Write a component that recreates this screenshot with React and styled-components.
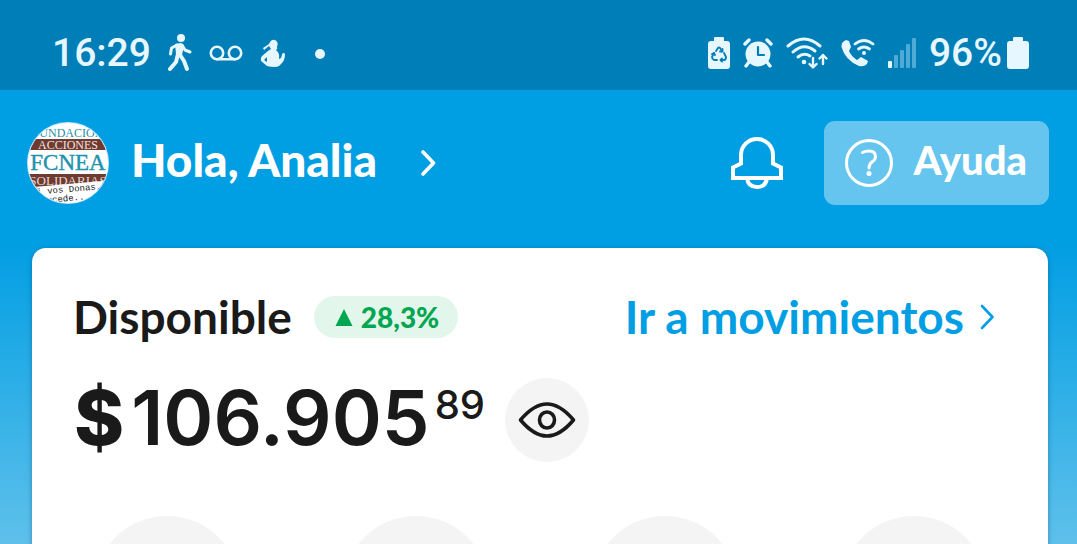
import React from 'react';
import styled, { createGlobalStyle } from 'styled-components';

const GlobalStyle = createGlobalStyle`
	* {
		box-sizing: border-box;
	}

	body {
		margin: 0;
		font-family: Lato, sans-serif;
		color: #1a1a1a;
	}

	svg {
		display: block;
		flex: none;
	}
`;

const Page = styled.div`
	height: 100vh;
	overflow: hidden;
	background: linear-gradient(#009ee3 240px, #60c1eb 550px);
`;

const StatusBar = styled.div`
	display: flex;
	justify-content: space-between;
	height: 90px;
	padding: 16px 48px 0 52px;
	background: #007eb8;
	color: #e6f7ff;
	font-family: Roboto, sans-serif;
	font-size: 39px;
	font-weight: 500;
`;

const StatusGroup = styled.div`
	display: flex;
	align-items: center;
	gap: ${({ $gap }) => $gap}px;
`;

const BatteryLevel = styled.span`
	display: flex;
	align-items: center;
	gap: 5px;
`;

const Header = styled.header`
	display: flex;
	align-items: center;
	justify-content: space-between;
	padding: 31px 28px 0 27px;
`;

const HeaderActions = styled.div`
	display: flex;
	align-items: center;
	gap: 40px;
`;

const PlainButton = styled.button`
	display: flex;
	align-items: center;
	padding: 0;
	border: 0;
	background: none;
	color: inherit;
	font: inherit;
	cursor: pointer;
`;

const ProfileButton = styled(PlainButton)`
	gap: 22px;
	color: #fff;
	font-size: 46px;
	font-weight: 900;
	line-height: 54px;
`;

const HeaderLabel = styled.span`
	padding-bottom: 6px;
`;

const ProfileName = styled(HeaderLabel)`
	padding-right: 22px;
`;

const BellButton = styled(PlainButton)`
	color: #fff;
`;

const HelpButton = styled(PlainButton)`
	gap: 20px;
	height: 84px;
	padding: 0 22px 0 20px;
	border-radius: 11px;
	background: #66c5ee;
	color: #fff;
	font-size: 40px;
	font-weight: 900;
	line-height: 54px;
`;

const Card = styled.main`
	margin: 43px 29px 0 32px;
	border-radius: 14px;
	background: #fff;
	box-shadow: 0 1px 5px rgba(0, 60, 100, 0.4);
`;

const CardTop = styled.div`
	display: flex;
	align-items: center;
	justify-content: space-between;
	padding: 42px 53px 0 41px;
`;

const Balance = styled.div`
	display: flex;
	align-items: center;
	gap: 22px;
`;

const Title = styled.h1`
	margin: 0;
	font-size: 46px;
	font-weight: 700;
	line-height: 54px;
`;

const Badge = styled.span`
	display: flex;
	align-items: center;
	gap: 8px;
	height: 42px;
	padding: 0 19px 0 21px;
	border-radius: 21px;
	background: #e3f6eb;
	color: #00a650;
	font-size: 28px;
	font-weight: 900;
`;

const MovementsLink = styled.a`
	display: flex;
	align-items: center;
	gap: 16px;
	color: #009ee3;
	font-size: 46px;
	font-weight: 700;
	line-height: 54px;
	text-decoration: none;
`;

const AmountRow = styled.div`
	display: flex;
	align-items: center;
	gap: 20px;
	padding: 34px 42px 0;
`;

const Amount = styled.div`
	display: flex;
	align-items: flex-start;
	padding-bottom: 6px;
	font-family: Inter, sans-serif;
	font-size: 76px;
	font-weight: 600;
	line-height: 78px;
`;

const Currency = styled.span`
	padding-right: 7px;
	font-weight: 800;
`;

const Cents = styled.sup`
	padding-left: 5px;
	font-size: 40px;
	font-weight: 500;
	line-height: 54px;
`;

const EyeButton = styled(PlainButton)`
	justify-content: center;
	width: 84px;
	height: 84px;
	border-radius: 50%;
	background: #f4f4f4;
`;

const Shortcuts = styled.div`
	display: grid;
	grid-template-columns: repeat(4, 1fr);
	justify-items: center;
	padding: 54px 10px 40px;
`;

const Shortcut = styled.span`
	width: 146px;
	height: 146px;
	border-radius: 50%;
	background: #f4f4f4;
`;

const line = {
	fill: 'none',
	stroke: 'currentColor',
	strokeLinecap: 'round',
	strokeLinejoin: 'round'
};

const WalkIcon = () => (
	<svg width="24" height="38" viewBox="0 0 24 38" aria-hidden="true">
		<circle cx="13" cy="4" r="4" fill="currentColor" />
		<path d="M7 10 L13 9 L16 12 L14 21 L9 22 L8 20 Z" fill="currentColor" />
		<g {...line}>
			<path d="M9 11 L3.5 14 L2.5 20" strokeWidth="3" />
			<path d="M14 11 L17 16 L22 18" strokeWidth="3" />
			<path d="M10 20 L8 28 L2 35" strokeWidth="4" />
			<path d="M12 21 L16 27 L19 35" strokeWidth="4" />
		</g>
	</svg>
);

const VoicemailIcon = () => (
	<svg width="34" height="18" viewBox="0 0 34 18" aria-hidden="true">
		<g {...line} strokeWidth="2.6">
			<circle cx="8" cy="9" r="6.2" />
			<circle cx="26" cy="9" r="6.2" />
			<path d="M8 15.2 H26" />
		</g>
	</svg>
);

const PersonIcon = () => (
	<svg width="26" height="28" viewBox="0 0 26 28" aria-hidden="true">
		<path
			d="M10 3 Q12 0 15 1 Q19 3 17 8 Q18 10 16 11 Q20 14 19 20 L21 19 Q22 17 22 15 Q24 13 25 15 Q25 22 21 25 Q19 28 15 28 Q10 28 7 27 L1 22 Q0 19 2 17 L8 12 L11 10 L9 7 L4 11 L3 9 L9 5 Z"
			fill="currentColor"
		/>
		<path d="M4 21 L7 18 L7 23 Z" fill="#007eb8" />
	</svg>
);

const DotIcon = () => (
	<svg width="34" height="12" viewBox="0 0 34 12" aria-hidden="true">
		<circle cx="17" cy="7" r="5" fill="currentColor" />
	</svg>
);

const BatteryIcon = ({ recycle }) => (
	<svg width="22" height="34" viewBox="0 0 22 34" aria-hidden="true">
		<path
			d="M7 1 H15 Q16 1 16 2 V5 H19 Q22 5 22 8 V30 Q22 33 19 33 H3 Q0 33 0 30 V8 Q0 5 3 5 H6 V2 Q6 1 7 1 Z"
			fill="currentColor"
		/>
		{recycle && (
			<g {...line} stroke="#007eb8" strokeWidth="1.8">
				<path d="M8 15 L10 12 Q11 11 12 12 L14 15" />
				<path d="M16 17 L18 21 Q18 24 16 24 H13" />
				<path d="M9 24 H6 Q4 23 4 21 L6 17" />
				<path d="M14.5 13 V15.5 H12 M14 22.5 L12.5 24 L14 25.5 M4 18 L6 17 L7 19" />
			</g>
		)}
	</svg>
);

const AlarmIcon = () => (
	<svg width="30" height="30" viewBox="0 0 30 30" aria-hidden="true">
		<circle cx="15" cy="16" r="12.5" fill="currentColor" />
		<g {...line} strokeWidth="3.4">
			<path d="M2 6 L6 2 M24 2 L28 6 M6 24 L3 28 M24 24 L27 28" />
		</g>
		<path d="M15 9 V17 H21" {...line} stroke="#007eb8" strokeWidth="2.2" />
	</svg>
);

const WifiIcon = () => (
	<svg width="42" height="32" viewBox="0 0 42 32" aria-hidden="true">
		<g {...line} strokeWidth="3">
			<path d="M2 9 Q18 -5 34 9" />
			<path d="M7 15 Q18 5 29 14" />
			<path d="M12 20 Q18 15 24 19" />
		</g>
		<circle cx="18" cy="25" r="2.3" fill="currentColor" />
		<g {...line} strokeWidth="2.4">
			<path d="M27 21 V30 M23.5 27 L27 30.5 L30.5 27" />
			<path d="M37 27 V18 M33.5 21.5 L37 18 L40.5 21.5" />
		</g>
	</svg>
);

const CallIcon = () => (
	<svg width="34" height="30" viewBox="0 0 34 30" aria-hidden="true">
		<path
			d="M5 2 L8 3 L10 9 L8 13 Q10 18 16 22 L20 19 L27 23 L26 26 Q23 29 18 28 Q4 22 0.5 9 Q0 4 5 2 Z"
			fill="currentColor"
		/>
		<g {...line} strokeWidth="2.8">
			<path d="M14 6 Q23 -1 32 6" />
			<path d="M17.5 11 Q23 7 28.5 11" />
		</g>
		<circle cx="23" cy="15" r="2" fill="currentColor" />
	</svg>
);

const SignalIcon = () => (
	<svg width="28" height="30" viewBox="0 0 28 30" aria-hidden="true">
		<rect x="0" y="23" width="4" height="7" rx="1" fill="currentColor" />
		<g fill="#4fabd6">
			<rect x="6" y="17" width="4" height="13" rx="1" />
			<rect x="12" y="12" width="4" height="18" rx="1" />
			<rect x="18" y="6" width="4" height="24" rx="1" />
			<rect x="24" y="0" width="4" height="30" rx="1" />
		</g>
	</svg>
);

const ChevronIcon = ({ strokeWidth }) => (
	<svg width="15" height="26" viewBox="0 0 15 26" aria-hidden="true">
		<path d="M2 2 L12.5 13 L2 24" {...line} strokeWidth={strokeWidth} />
	</svg>
);

const BellIcon = () => (
	<svg width="54" height="54" viewBox="0 0 54 54" aria-hidden="true">
		<g fill="none" stroke="currentColor" strokeWidth="4">
			<path d="M3 42 V31.5 L11 27.5 V19 A16 16 0 0 1 43 19 V27.5 L51 31.5 V42 Z" />
			<path d="M17 42 Q18 51 27 51 Q36 51 37 42" />
		</g>
	</svg>
);

const HelpIcon = () => (
	<svg width="50" height="50" viewBox="0 0 50 50" aria-hidden="true">
		<g {...line} strokeWidth="3">
			<circle cx="25" cy="25" r="22.5" />
			<path d="M18.5 14.5 Q21 13 25 13 Q31.5 13 31.5 18.5 Q31.5 21.5 28.5 23.5 Q25 26 25 30" />
		</g>
		<circle cx="25" cy="35.5" r="2.5" fill="currentColor" />
	</svg>
);

const EyeIcon = () => (
	<svg width="58" height="40" viewBox="0 0 58 40" aria-hidden="true">
		<g {...line} strokeWidth="3.6">
			<path d="M2.5 20 Q16 4 29 4 Q42 4 55.5 20 Q42 36 29 36 Q16 36 2.5 20 Z" />
			<ellipse cx="29" cy="20" rx="7.5" ry="8" />
		</g>
	</svg>
);

const TriangleIcon = () => (
	<svg width="18" height="18" viewBox="0 0 18 18" aria-hidden="true">
		<path d="M9 1 L17.5 18 H0.5 Z" fill="currentColor" />
	</svg>
);

// round badge of the foundation: striped bands with a tilted note on top
const Avatar = () => (
	<svg width="82" height="82" viewBox="0 0 82 82" aria-hidden="true">
		<clipPath id="avatar">
			<circle cx="41" cy="41" r="40" />
		</clipPath>
		<circle cx="41" cy="41" r="41" fill="#c8eafa" />
		<g
			clipPath="url(#avatar)"
			fontFamily="Liberation Serif, serif"
			fontWeight="400"
			textAnchor="middle"
		>
			<rect width="82" height="82" fill="#fff" />
			<rect y="17" width="82" height="11" fill="#6f3b31" />
			<rect y="52" width="82" height="16" fill="#6f3b31" />
			<text x="41" y="15" fontSize="12" fill="#2a8fa8">FUNDACION</text>
			<text x="41" y="27" fontSize="12" fill="#f0e4e0">ACCIONES</text>
			<text x="41" y="48" fontSize="23" fill="#1f93ad" stroke="#1f93ad" strokeWidth="0.4">
				FCNEA
			</text>
			<text x="41" y="63" fontSize="13" fill="#e6d6d0">SOLIDARIAS</text>
			<g transform="rotate(-5 41 70)">
				<rect x="-5" y="62" width="92" height="24" fill="#fff" />
				<g fontFamily="Liberation Mono, monospace" fontSize="9" fill="#222">
					<text x="42" y="70">i vos Donas.</text>
					<text x="38" y="79">ucede..</text>
				</g>
			</g>
		</g>
	</svg>
);

export default () => (
	<>
		<GlobalStyle />
		<Page>
			<StatusBar>
				<StatusGroup $gap={17}>
					<span>16:29</span>
					<WalkIcon />
					<VoicemailIcon />
					<PersonIcon />
					<DotIcon />
				</StatusGroup>
				<StatusGroup $gap={13}>
					<BatteryIcon recycle />
					<AlarmIcon />
					<WifiIcon />
					<CallIcon />
					<SignalIcon />
					<BatteryLevel>
						96%
						<BatteryIcon />
					</BatteryLevel>
				</StatusGroup>
			</StatusBar>

			<Header>
				<ProfileButton type="button">
					<Avatar />
					<ProfileName>Hola, Analia</ProfileName>
					<ChevronIcon strokeWidth={3.6} />
				</ProfileButton>
				<HeaderActions>
					<BellButton type="button" aria-label="Notificaciones">
						<BellIcon />
					</BellButton>
					<HelpButton type="button">
						<HelpIcon />
						<HeaderLabel>Ayuda</HeaderLabel>
					</HelpButton>
				</HeaderActions>
			</Header>

			<Card>
				<CardTop>
					<Balance>
						<Title>Disponible</Title>
						<Badge>
							<TriangleIcon />
							28,3%
						</Badge>
					</Balance>
					<MovementsLink href="#movimientos">
						Ir a movimientos
						<ChevronIcon strokeWidth={2.6} />
					</MovementsLink>
				</CardTop>
				<AmountRow>
					<Amount>
						<Currency>$</Currency>
						<span>106.905</span>
						<Cents>89</Cents>
					</Amount>
					<EyeButton type="button" aria-label="Ocultar saldo">
						<EyeIcon />
					</EyeButton>
				</AmountRow>
				<Shortcuts>
					<Shortcut />
					<Shortcut />
					<Shortcut />
					<Shortcut />
				</Shortcuts>
			</Card>
		</Page>
	</>
);
